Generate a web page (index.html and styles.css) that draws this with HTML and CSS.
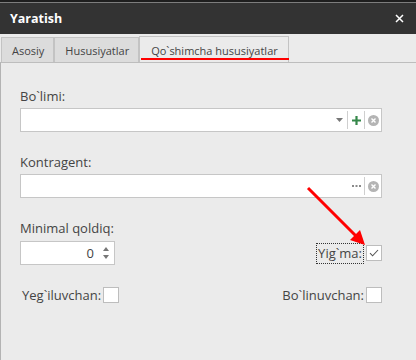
FILE: index.html
```html
<!DOCTYPE html>
<html lang="uz">
<head>
    <meta charset="UTF-8">
    <title>Yaratish</title>
    <link rel="stylesheet" href="styles.css">
</head>
<body>
    <div class="window">
        <div class="top-strip"></div>
        <div class="title-bar">
            <span class="title">Yaratish</span>
            <span class="close">
                <svg width="9" height="9" viewBox="0 0 9 9"><path d="M1 1L8 8M8 1L1 8" stroke="#fff" stroke-width="1.5"/></svg>
            </span>
        </div>

        <div class="tabs">
            <div class="tab">Asosiy</div>
            <div class="tab">Hususiyatlar</div>
            <div class="tab active">Qo`shimcha hususiyatlar</div>
        </div>

        <div class="panel">
            <div class="form-group">
                <div class="label">Bo`limi:</div>
                <div class="field">
                    <span class="field-text"></span>
                    <span class="ico">
                        <svg width="7" height="4" viewBox="0 0 7 4"><path d="M0 0H7L3.5 4Z" fill="#777"/></svg>
                    </span>
                    <span class="ico sep">
                        <svg width="9" height="9" viewBox="0 0 9 9"><path d="M4.5 0V9M0 4.5H9" stroke="#35884a" stroke-width="2.2"/></svg>
                    </span>
                    <span class="ico sep">
                        <svg width="11" height="11" viewBox="0 0 11 11"><circle cx="5.5" cy="5.5" r="5.5" fill="#b4b4b4"/><path d="M3.5 3.5L7.5 7.5M7.5 3.5L3.5 7.5" stroke="#fff" stroke-width="1.4"/></svg>
                    </span>
                </div>
            </div>

            <div class="form-group">
                <div class="label">Kontragent:</div>
                <div class="field">
                    <span class="field-text"></span>
                    <span class="ico">
                        <svg width="9" height="2" viewBox="0 0 9 2"><path d="M0 0h2v2H0zM3.5 0h2v2h-2zM7 0h2v2H7z" fill="#8a8a8a"/></svg>
                    </span>
                    <span class="ico sep">
                        <svg width="11" height="11" viewBox="0 0 11 11"><circle cx="5.5" cy="5.5" r="5.5" fill="#b4b4b4"/><path d="M3.5 3.5L7.5 7.5M7.5 3.5L3.5 7.5" stroke="#fff" stroke-width="1.4"/></svg>
                    </span>
                </div>
            </div>

            <div class="form-group last">
                <div class="label">Minimal qoldiq:</div>
                <div class="row">
                    <div class="spin">
                        <span class="spin-value">0</span>
                        <span class="spin-btns">
                            <svg width="6" height="4" viewBox="0 0 6 4"><path d="M0 4H6L3 0Z" fill="#777"/></svg>
                            <svg width="6" height="4" viewBox="0 0 6 4"><path d="M0 0H6L3 4Z" fill="#777"/></svg>
                        </span>
                    </div>
                    <div class="check-item">
                        <span class="focus">Yig`ma:</span>
                        <span class="checkbox">
                            <svg width="10" height="8" viewBox="0 0 10 8"><path d="M1 4.2L3.6 6.8L9 1" fill="none" stroke="#555" stroke-width="1.1"/></svg>
                        </span>
                    </div>
                </div>
            </div>

            <div class="row bottom-row">
                <div class="check-item first">
                    <span>Yeg`iluvchan:</span>
                    <span class="checkbox"></span>
                </div>
                <div class="check-item">
                    <span>Bo`linuvchan:</span>
                    <span class="checkbox"></span>
                </div>
            </div>
        </div>

        <svg class="pointer" width="416" height="360" viewBox="0 0 416 360">
            <path d="M308 188L357 237" stroke="#f00" stroke-width="3"/>
            <path d="M365 245L350 240L360 230Z" fill="#f00"/>
        </svg>
    </div>
</body>
</html>
```

FILE: styles.css
```css
body {
    margin: 0;
    font-family: 'Open Sans', 'Liberation Sans', sans-serif;
    font-size: 13px;
    color: #444;
    background-color: #ebebeb;
}

.window {
    position: relative;
    height: 360px;
    overflow: hidden;
}

.top-strip {
    height: 2px;
    background-color: #1e1e1e;
    border-bottom: 1px solid #7d7d7d;
}

.title-bar {
    height: 31px;
    background-color: #333;
    display: flex;
    align-items: center;
    justify-content: space-between;
    padding: 0 12px 0 10px;
}

.title {
    color: #fff;
    font-weight: bold;
    font-size: 12.5px;
}

.close {
    display: flex;
}

.tabs {
    display: flex;
    align-items: flex-end;
    height: 28px;
    padding-left: 1px;
}

.tab {
    height: 25px;
    line-height: 25px;
    padding: 0 9px 0 10px;
    font-size: 11px;
    background-color: #dcdcdc;
    border: 1px solid #c3c3c3;
    border-bottom: none;
    box-sizing: border-box;
}

.tab.active {
    position: relative;
    height: 26px;
    line-height: 27px;
    padding: 0 10px 0 11px;
    background-color: #ebebeb;
}

.tab.active::after {
    content: '';
    position: absolute;
    left: 1px;
    right: -1px;
    bottom: 2px;
    height: 2px;
    background-color: #f00;
}

.panel {
    border-top: 1px solid #bdbdbd;
    border-left: 1px solid #b3b3b3;
    padding: 24px 34px 0 19px;
    height: 297px;
}

.label {
    line-height: 19px;
    margin-bottom: 2px;
}

.form-group {
    margin-bottom: 21px;
}

.form-group.last {
    margin-bottom: 0;
}

.form-group.last .label {
    margin-bottom: 3px;
}

.field {
    display: flex;
    align-items: center;
    height: 24px;
    background-color: #fff;
    border: 1px solid #c6c6c6;
    box-sizing: border-box;
}

.field-text {
    flex: 1;
}

.ico {
    width: 16px;
    height: 18px;
    display: flex;
    align-items: center;
    justify-content: center;
}

.ico.sep {
    border-left: 1px solid #cfcfcf;
}

.row {
    display: flex;
    justify-content: space-between;
    align-items: center;
}

.spin {
    display: flex;
    align-items: center;
    justify-content: flex-end;
    width: 95px;
    height: 24px;
    background-color: #fff;
    border: 1px solid #c6c6c6;
    box-sizing: border-box;
}

.spin-value {
    font-size: 13px;
    margin-right: 9px;
}

.spin-btns {
    display: flex;
    flex-direction: column;
    gap: 4px;
    margin-right: 5px;
}

.check-item {
    display: flex;
    align-items: center;
    gap: 2px;
}

.check-item.first {
    padding-left: 2px;
}

.focus {
    border: 1px dotted #333;
    padding: 0 1px;
    line-height: 19px;
}

.checkbox {
    width: 16px;
    height: 16px;
    background-color: #fff;
    border: 1px solid #bdbdbd;
    box-sizing: border-box;
    display: flex;
    align-items: center;
    justify-content: center;
}

.bottom-row {
    margin-top: 21px;
}

.pointer {
    position: absolute;
    left: 0;
    top: 0;
    pointer-events: none;
}
```
